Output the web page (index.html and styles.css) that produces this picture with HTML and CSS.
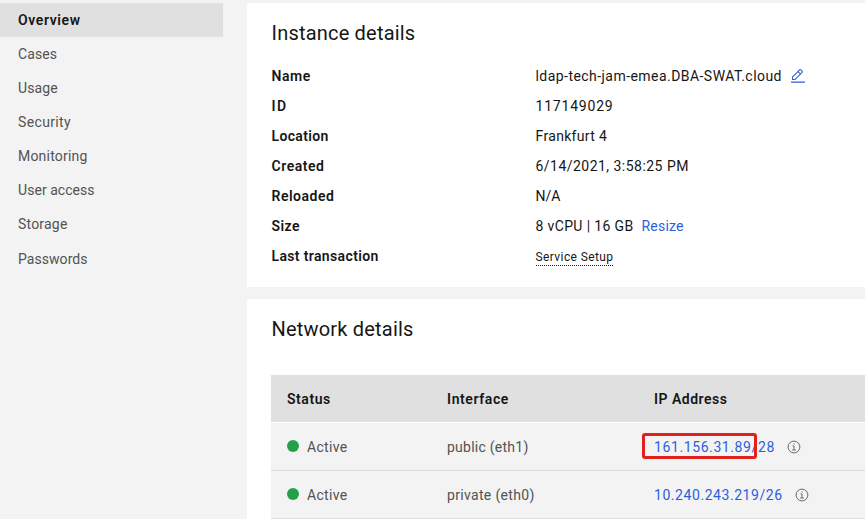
FILE: index.html
```html
<!DOCTYPE html>
<html lang="en">
<head>
<meta charset="utf-8">
<title>Instance overview</title>
<link rel="stylesheet" href="styles.css">
</head>
<body>
<div class="layout">
  <nav class="sidebar">
    <a class="nav-item active t60">Overview</a>
    <a class="nav-item t10">Cases</a>
    <a class="nav-item t10">Usage</a>
    <a class="nav-item t36">Security</a>
    <a class="nav-item t20">Monitoring</a>
    <a class="nav-item t5">User access</a>
    <a class="nav-item t20">Storage</a>
    <a class="nav-item t5 last">Passwords</a>
  </nav>
  <main class="content">
    <section class="card instance">
      <h2 class="t20">Instance details</h2>
      <dl class="details">
        <dt class="t54">Name</dt>
        <dd><span class="t45">ldap-tech-jam-emea.DBA-SWAT.cloud</span><svg class="edit" viewBox="0 0 32 32"><path d="M2 27h28v2.400H2zM25.400 9c.8-.8.8-2 0-2.800l-3.600-3.600c-.8-.8-2-.8-2.800 0l-15 15V24h6.400l15-15zm-5-5L24 7.600l-3 3L17.400 7l3-3zM6 22v-3.600l10-10 3.600 3.600-10 10H6z"/></svg></dd>
        <dt class="t150">ID</dt>
        <dd class="t80">117149029</dd>
        <dt class="t33">Location</dt>
        <dd class="t33">Frankfurt 4</dd>
        <dt class="t54">Created</dt>
        <dd class="t47">6/14/2021, 3:58:25 PM</dd>
        <dt class="t50">Reloaded</dt>
        <dd class="t0">N/A</dd>
        <dt class="t47">Size</dt>
        <dd><span class="t36">8 vCPU | 16 GB</span><a class="resize t20">Resize</a></dd>
        <dt class="t36">Last transaction</dt>
        <dd><span class="transaction t40">Service Setup</span></dd>
      </dl>
    </section>
    <section class="card network">
      <h2 class="t20">Network details</h2>
      <div class="table">
        <div class="row head">
          <span class="t56">Status</span><span class="t60">Interface</span><span class="t50">IP Address</span>
        </div>
        <div class="row">
          <span class="status t33"><i class="dot"></i>Active</span>
          <span class="t25">public (eth1)</span>
          <span class="address"><a class="marked t60">161.156.31.89/28</a><svg class="info" viewBox="0 0 14 14"><circle cx="7" cy="7" r="5.900"/><path d="M5.500 6H7v4M5.200 10h3.600M7 3.400v1.200"/></svg></span>
        </div>
        <div class="row">
          <span class="status t33"><i class="dot"></i>Active</span>
          <span class="t33">private (eth0)</span>
          <span class="address"><a class="t56">10.240.243.219/26</a><svg class="info" viewBox="0 0 14 14"><circle cx="7" cy="7" r="5.900"/><path d="M5.500 6H7v4M5.200 10h3.600M7 3.400v1.200"/></svg></span>
        </div>
      </div>
    </section>
  </main>
</div>
</body>
</html>
```
FILE: styles.css
```css
*, *::after { box-sizing: border-box; }

body {
  margin: 0;
  height: 519px;
  overflow: hidden;
  background: #f3f3f3;
  color: #161616;
  font: 14px/18px Roboto, "Noto Sans", sans-serif;
}

.layout {
  display: grid;
  grid-template-columns: 223px 1fr;
  column-gap: 24px;
  height: 519px;
  padding-top: 3px;
}

.nav-item {
  display: block;
  height: 34px;
  padding-left: 18px;
  line-height: 34px;
  color: #525252;
}

.nav-item.active {
  background: #e0e0e0;
  color: #161616;
  font-weight: 600;
}

.nav-item.last { margin-top: 1px; }

.card {
  padding: 0 0 0 24px;
  background: #fff;
}

.instance { height: 284px; padding-top: 17px; }
.network { height: 240px; margin-top: 12px; padding-top: 17px; }

h2 {
  margin: 0;
  font-size: 20px;
  line-height: 26px;
  font-weight: 400;
}

.details {
  display: grid;
  grid-template-columns: 264px 1fr;
  grid-auto-rows: 30px;
  align-items: center;
  margin: 15px 0 0;
}

dt { font-weight: 600; }
dd { display: flex; align-items: center; margin: 0; }
h2, dt, dd { padding-left: .5px; }

a { color: #2b5fe0; }

.edit {
  width: 16px;
  height: 16px;
  margin: 0 0 0 8px;
  fill: #2b5fe0;
}

.resize { margin-left: 8px; }

.transaction {
  margin-top: 2px;
  border-bottom: 1px dotted #161616;
  font-size: 12px;
  line-height: 16px;
}

.table { margin-top: 33px; }

.row {
  display: grid;
  grid-template-columns: 160px 207px 1fr;
  align-items: center;
  height: 48px;
  padding-left: 16px;
  border-bottom: 1px solid #dcdcdc;
  background: #f3f3f3;
  color: #525252;
}

.row.head {
  background: #e0e0e0;
  border-bottom-color: #fff;
  color: #161616;
  font-weight: 600;
}

.status, .address { display: flex; align-items: center; }

.dot {
  width: 12px;
  height: 12px;
  margin: -2px 8px 0 0;
  border-radius: 50%;
  background: #24a148;
}

.info {
  width: 14px;
  height: 14px;
  margin-left: 12px;
  fill: none;
  stroke: #6a6a6a;
}

.marked { position: relative; }

.marked::after {
  content: "";
  position: absolute;
  left: -12px;
  top: -5px;
  width: 115px;
  height: 26px;
  border: 3px solid #e3211c;
  border-radius: 3px;
}

.t0 { letter-spacing: 0; }
.t5 { letter-spacing: .05px; }
.t10 { letter-spacing: .1px; }
.t20 { letter-spacing: .2px; }
.t25 { letter-spacing: .25px; }
.t33 { letter-spacing: .33px; }
.t36 { letter-spacing: .36px; }
.t40 { letter-spacing: .4px; }
.t45 { letter-spacing: .45px; }
.t47 { letter-spacing: .47px; }
.t50 { letter-spacing: .5px; }
.t54 { letter-spacing: .54px; }
.t56 { letter-spacing: .56px; }
.t60 { letter-spacing: .6px; }
.t80 { letter-spacing: .8px; }
.t150 { letter-spacing: 1.5px; }
```
